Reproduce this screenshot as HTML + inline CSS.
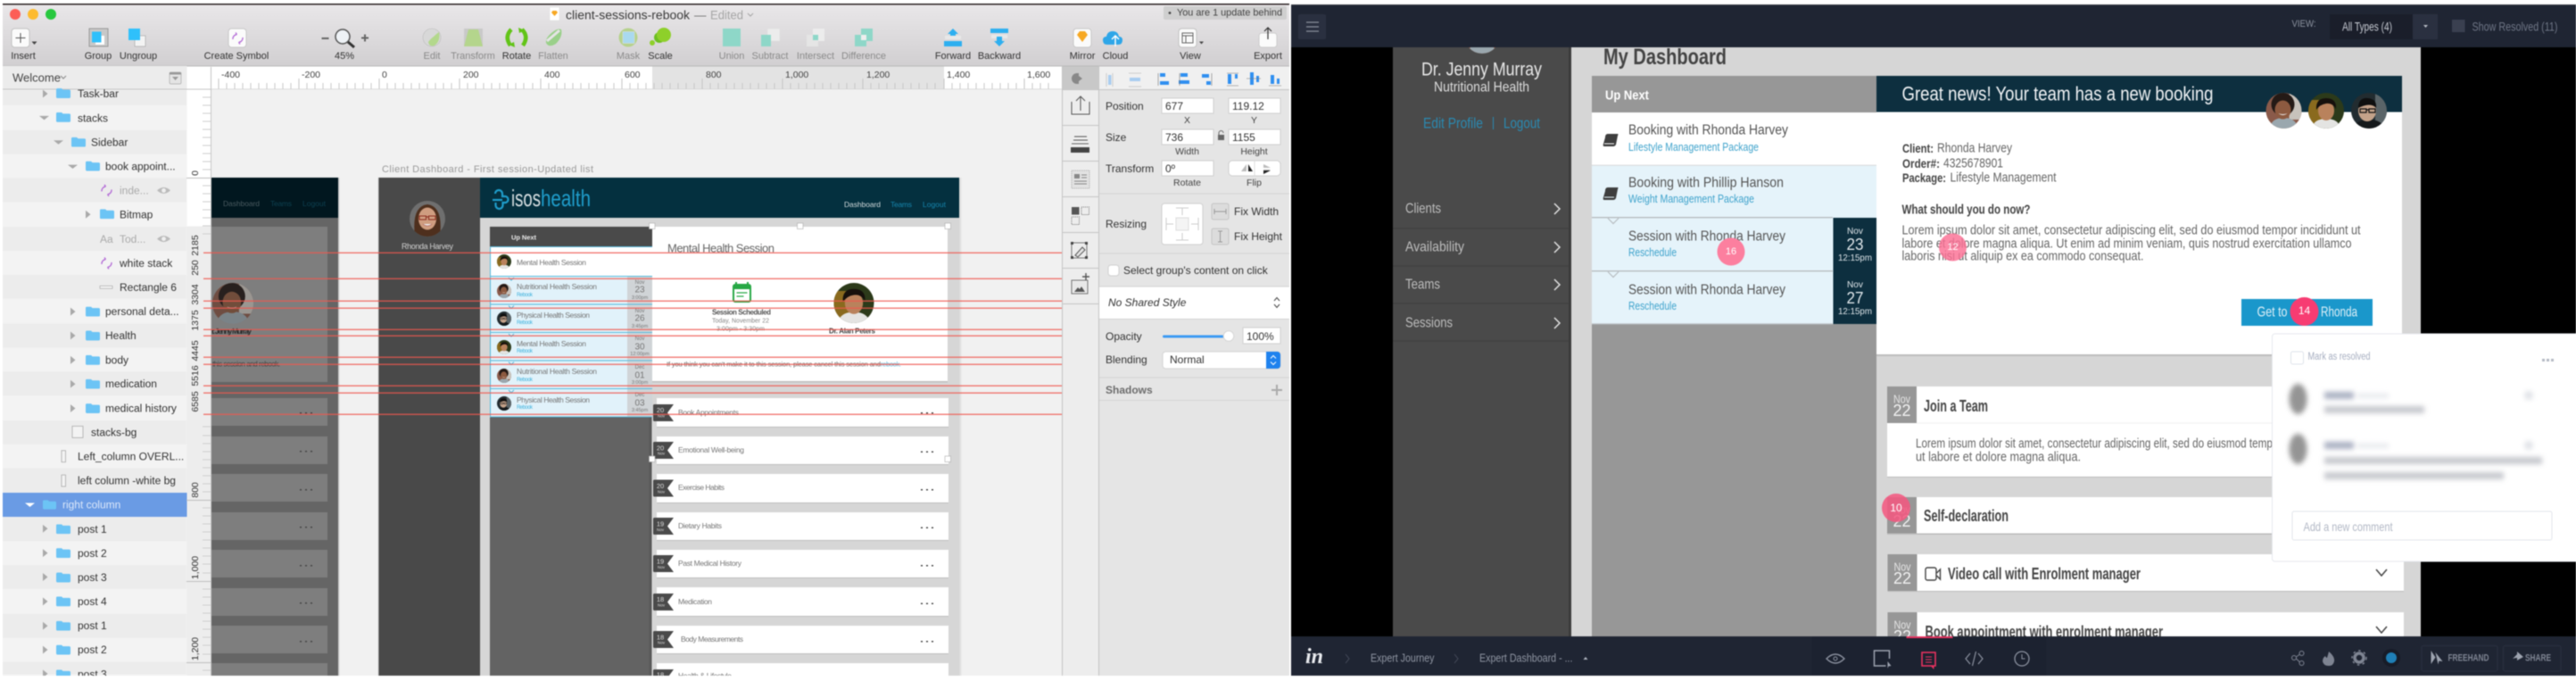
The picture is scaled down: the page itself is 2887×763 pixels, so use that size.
<!DOCTYPE html>
<html><head><meta charset="utf-8"><title>Sketch and InVision</title>
<style>
html,body{margin:0;padding:0;background:#fff;width:2887px;height:763px;overflow:hidden}
svg{display:block;filter:blur(.4px)}
text{font-family:"Liberation Sans",sans-serif;dominant-baseline:central;white-space:pre}
.m{text-anchor:middle}.e{text-anchor:end}.b{font-weight:bold}
.tb{font-size:11px;fill:#333;text-anchor:middle}.tg{font-size:11px;fill:#8a8a8a;text-anchor:middle}
.ru{font-size:10.5px;fill:#444}
.ly{font-size:12px;fill:#333}.lg{font-size:12px;fill:#aaa}
.in{font-size:12px;fill:#333}.ins{font-size:10.5px;fill:#444;text-anchor:middle}
.v{font-size:10.5px;fill:#444;text-anchor:middle}
.rt{font-size:15.5px;fill:#555}.rs{font-size:12.5px;fill:#3fa3cc}
.nv{font-size:16px;fill:#bdbdbd}
.sm{font-size:8.5px;fill:#777}.sb{font-size:6px;fill:#45b4de}
.dn{fill:#777;text-anchor:middle}
.ct{font-size:11px;fill:#777}
.bd{font-size:15px;fill:#666}
.ti{font-size:18px;fill:#444;font-weight:bold}
</style></head><body>
<svg xmlns="http://www.w3.org/2000/svg" width="2887" height="763" viewBox="0 0 2887 763">
<defs>
<linearGradient id="tg" x1="0" y1="0" x2="0" y2="1"><stop offset="0" stop-color="#e9e7e9"/><stop offset="1" stop-color="#d1cfd1"/></linearGradient>
<symbol id="fo" viewBox="0 0 16 11"><path d="M0 1.5Q0 0 1.5 0H6L7.500 1.500H14.500Q16 1.500 16 3V9.500Q16 11 14.500 11H1.500Q0 11 0 9.500Z" fill="#6cc4f5"/></symbol>
<path id="ar" d="M0 0L5.500 4.500L0 9Z" fill="#a9a9a9"/>
<path id="ad" d="M0 0H11L5.500 4.500Z" fill="#a9a9a9"/>
<path id="dt" d="M0 0h2v1.500H0zM6 0h2v1.500H6zM12 0h2v1.500h-2z" fill="#444"/>
<path id="rb" d="M1.500 0H23L16 9.500L23 19H1.500Q0 19 0 17.500V1.500Q0 0 1.500 0Z" fill="#4a4a4a"/>
<g id="ey"><path d="M0 4.500Q7.500 -2.500 15 4.500Q7.500 11.500 0 4.500Z" fill="#bbb"/><circle cx="7.500" cy="4.500" r="2.400" fill="#f0f0f0"/></g>
<g id="sy" fill="none" stroke="#b36bd6" stroke-width="1.300"><path d="M2 8A5 5 0 0 1 6.500 2.500M6.500 2.500L5 0.500M6.500 2.500L4 3.500"/><path d="M13 6A5 5 0 0 1 8.500 11.500M8.500 11.500L10 13.500M8.500 11.500L11 10.500"/></g>
<clipPath id="cc"><circle cx="20" cy="20" r="20"/></clipPath>
<symbol id="am" viewBox="0 0 40 40"><g clip-path="url(#cc)"><rect width="40" height="40" fill="#2c3a1a"/><rect width="16" height="28" y="8" fill="#8a6a1e"/><path d="M4 40Q6 29 20 29Q34 29 36 40Z" fill="#e4e4e2"/><ellipse cx="20" cy="20" rx="9" ry="11" fill="#b9825c"/><path d="M9 19Q8 6 20 6Q32 6 31 18Q27 11 20 12Q13 13 9 19Z" fill="#16100c"/></g></symbol>
<symbol id="aw" viewBox="0 0 40 40"><g clip-path="url(#cc)"><rect width="40" height="40" fill="#8a5a4a"/><rect x="26" width="14" height="30" fill="#c7c2bb"/><path d="M4 40Q6 28 20 28Q34 28 36 40Z" fill="#9aa7ae"/><circle cx="19" cy="13" r="13" fill="#241a16"/><ellipse cx="19" cy="19" rx="9" ry="10.500" fill="#8d5a40"/><path d="M14 23Q19 27 24 23Q19 25 14 23Z" fill="#eee"/></g></symbol>
<symbol id="ag" viewBox="0 0 40 40"><g clip-path="url(#cc)"><rect width="40" height="40" fill="#222c30"/><rect x="27" width="13" height="40" fill="#5a6468"/><path d="M2 40Q6 30 20 30Q34 30 38 40Z" fill="#15191b"/><ellipse cx="18" cy="20" rx="10" ry="12" fill="#c4a28a"/><path d="M8 17Q8 5 19 6Q29 7 28 17Q22 10 8 17Z" fill="#0f0f0f"/><path d="M10 18h7v4h-7zM20 18h7v4h-7zM17 19h3" fill="none" stroke="#111" stroke-width="1.200"/></g></symbol>
<symbol id="ar2" viewBox="0 0 40 40"><g clip-path="url(#cc)"><rect width="40" height="40" fill="#6f6f6f"/><path d="M6 40Q2 6 20 4Q38 6 34 40Z" fill="#4e2f1d"/><ellipse cx="20" cy="20" rx="10" ry="12.500" fill="#cf9d80"/><path d="M11 17h7.500v4H11zM21.500 17H29v4h-7.500zM18.500 18h3" fill="none" stroke="#8c2f20" stroke-width="1.100"/><path d="M15 26Q20 30 25 26" fill="#eee" stroke="#a55" stroke-width=".6"/></g></symbol>
<filter id="bl" x="-30%" y="-30%" width="160%" height="160%"><feGaussianBlur stdDeviation="3"/></filter>
</defs>

<rect width="2887" height="763" fill="#fff"/>

<!-- SKETCH WINDOW -->
<rect x="3" y="5" width="1442" height="752" fill="#f1f1f1"/>
<rect x="3" y="4" width="1442" height="1.500" fill="#2b2222"/>
<rect x="3" y="5.500" width="1442" height="68.500" fill="url(#tg)"/>
<rect x="3" y="73.500" width="1442" height="1" fill="#b9b9b9"/>
<circle cx="17" cy="16" r="6" fill="#fc5e56"/><circle cx="37" cy="16" r="6" fill="#fdbb2f"/><circle cx="57" cy="16" r="6" fill="#28c83f"/>
<rect x="616" y="8" width="11" height="15" fill="#fff" stroke="#ddd" stroke-width=".5"/><path d="M618 14l1.500-2h4l1.500 2-3.500 4z" fill="#f7a823"/>
<text x="634" y="17" font-size="13.500" fill="#3a3a3a" textLength="139" lengthAdjust="spacingAndGlyphs">client-sessions-rebook</text>
<text x="778" y="17" font-size="13.500" fill="#777">—</text>
<text x="796" y="17" font-size="13.500" fill="#a5a5a5" textLength="37" lengthAdjust="spacingAndGlyphs">Edited</text>
<path d="M838 15l3 3 3-3" fill="none" stroke="#a5a5a5"/>
<rect x="1304" y="7" width="138" height="15" rx="2" fill="#cfcfcf"/>
<circle cx="1311" cy="14.500" r="1.400" fill="#444"/>
<text x="1319" y="14.500" font-size="11" fill="#444" textLength="118" lengthAdjust="spacingAndGlyphs">You are 1 update behind</text>

<!-- toolbar icons -->
<rect x="13" y="32" width="20" height="21" rx="3.500" fill="#fbfbfb" stroke="#c2c2c2"/>
<path d="M23 37v11M17.500 42.500h11" stroke="#555"/><path d="M35.500 46.500h6l-3 3.500z" fill="#444"/>
<rect x="100" y="32" width="21" height="20" fill="#c8c8c8" stroke="#999"/><rect x="107" y="40" width="10" height="10" fill="#fff"/><rect x="103" y="35.500" width="10.500" height="12" fill="#2fc0fb"/>
<rect x="151" y="40" width="12" height="12" fill="#f3f3f3" stroke="#aaa" stroke-width=".7"/><rect x="144" y="32" width="13" height="13" fill="#2fc0fb"/>
<rect x="256" y="32" width="20" height="21" rx="3.500" fill="#fbfbfb" stroke="#c8c8c8"/><use href="#sy" x="259" y="36" stroke="#d35fe8"/>
<rect x="360.500" y="42" width="8" height="2" fill="#666"/>
<circle cx="384" cy="41" r="8" fill="#eef2f6" stroke="#555" stroke-width="1.500"/><path d="M390 47l7 6" stroke="#333" stroke-width="3"/>
<path d="M405 42.500h8M409 38.500v8" stroke="#666" stroke-width="2"/>
<circle cx="484" cy="42" r="10" fill="#d8d8d8" stroke="#bbb" stroke-width=".6"/><path d="M492 36q2 10-5 15q-6 2-7-4q3-4 6-6q3-3 6-5z" fill="#b3d88c"/>
<rect x="520" y="32" width="21" height="20" fill="#c9c9c9"/><path d="M525 33h11l5 19h-21z" fill="#b4d58c"/>
<path d="M573 33q-8 8-1 18M585 33q8 8 1 18" fill="none" stroke="#62c418" stroke-width="4.500"/><path d="M570 50l6-3 1 6zM588 34l-6 3-1-6z" fill="#62c418"/>
<path d="M629 33q2 8-6 16q-8 5-11-1q-1-5 6-11q7-6 11-4z" fill="#9ad08a"/><path d="M613 46l14-12" stroke="#e6e4e6" stroke-width="3"/>
<circle cx="704" cy="42" r="10.500" fill="#b6d28d"/><rect x="698" y="35.500" width="13" height="13" fill="#a9d9ef" stroke="#ddd" stroke-width=".6"/>
<circle cx="739" cy="42" r="6" fill="#6cbf20"/><circle cx="744" cy="39" r="8" fill="#8ed02a"/><circle cx="731" cy="48" r="3" fill="#8ed02a"/>
<path d="M810 32h20v20h-10v-10h-10zM810 42h10v10h-10z" fill="#8ed7c8"/>
<rect x="860" y="32" width="14" height="14" fill="#ececec" stroke="#ddd" stroke-width=".5"/><rect x="853" y="39" width="11" height="13" fill="#8ed7c8"/>
<rect x="911" y="32" width="13" height="14" fill="#ececec"/><rect x="904" y="39" width="13" height="13" fill="#e5e5e5"/><rect x="911" y="39" width="6" height="6" fill="#8ed7c8"/>
<path d="M965 32h13v14h-7v6h-13v-13h7z" fill="#8ed7c8"/><rect x="965" y="39" width="6" height="6" fill="#eee"/>
<path d="M1068 32l6 6h-3v6h-6v-6h-3z" fill="#2daff0"/><rect x="1059" y="40" width="18" height="4" fill="#e8e8e8"/><rect x="1058" y="46" width="20" height="6" fill="#2daff0"/>
<rect x="1110" y="32" width="20" height="5" fill="#2daff0"/><rect x="1111" y="39" width="18" height="4" fill="#e8e8e8"/><path d="M1120 52l-6-6h3v-5h6v5h3z" fill="#2daff0"/>
<rect x="1203" y="32" width="20" height="21" rx="3.500" fill="#fbfbfb" stroke="#c8c8c8"/><path d="M1207 39l3-4h6l3 4-6 8z" fill="#f7a823"/>
<path d="M1241 50q-5 0-5-5q0-4 4-4q1-6 7-6q6 0 7 6q4 0 4 4q0 5-5 5z" fill="#2ea6e8"/><path d="M1250 52v-12M1246 44l4-4 4 4" fill="none" stroke="#fff" stroke-width="1.500"/>
<rect x="1321" y="32" width="20" height="21" rx="3.500" fill="#fbfbfb" stroke="#c2c2c2"/><rect x="1325" y="37" width="12" height="11" fill="none" stroke="#666"/><path d="M1325 40h12M1329 40v8" stroke="#666"/><path d="M1344 46.500h5l-2.500 3z" fill="#444"/>
<rect x="1411" y="37" width="20" height="16" rx="3" fill="#fbfbfb" stroke="#ccc"/><path d="M1421 44V31M1417 35l4-4 4 4" fill="none" stroke="#333" stroke-width="1.200"/>

<text x="26" y="63" class="tb">Insert</text><text x="110" y="63" class="tb">Group</text><text x="155" y="63" class="tb">Ungroup</text>
<text x="265" y="63" class="tb">Create Symbol</text><text x="386" y="63" class="tb">45%</text>
<text x="484" y="63" class="tg">Edit</text><text x="530" y="63" class="tg">Transform</text><text x="579" y="63" class="tb">Rotate</text><text x="620" y="63" class="tg">Flatten</text>
<text x="704" y="63" class="tg">Mask</text><text x="740" y="63" class="tb">Scale</text>
<text x="820" y="63" class="tg">Union</text><text x="863" y="63" class="tg">Subtract</text><text x="914" y="63" class="tg">Intersect</text><text x="968" y="63" class="tg">Difference</text>
<text x="1068" y="63" class="tb">Forward</text><text x="1120" y="63" class="tb">Backward</text><text x="1213" y="63" class="tb">Mirror</text><text x="1250" y="63" class="tb">Cloud</text>
<text x="1334" y="63" class="tb">View</text><text x="1421" y="63" class="tb">Export</text>

<!-- layer panel -->
<rect x="3" y="74" width="206.500" height="683" fill="#f3f3f3"/>
<rect x="3" y="74.500" width="206.500" height="25.500" fill="#ececec"/><rect x="3" y="99.500" width="206.500" height="1" fill="#c4c4c4"/>
<text x="14" y="87" font-size="13" fill="#444">Welcome</text><path d="M68 85l3 3 3-3" fill="none" stroke="#888"/>
<rect x="190" y="81" width="13" height="13" rx="1.500" fill="#e4e4e4" stroke="#aaa" stroke-width=".7"/><path d="M193 86h7l-3.500 4z" fill="#999"/><rect x="190" y="81" width="13" height="2.500" fill="#999"/>
<g transform="translate(0,0.58) scale(1,.9945)">
<g fill="#ececec">
<rect x="3" y="101" width="206" height="17"/><rect x="3" y="146" width="206" height="27"/><rect x="3" y="200" width="206" height="27"/><rect x="3" y="255" width="206" height="27"/><rect x="3" y="309" width="206" height="27"/><rect x="3" y="364" width="206" height="27"/><rect x="3" y="418" width="206" height="27"/><rect x="3" y="473" width="206" height="27"/><rect x="3" y="527" width="206" height="27"/><rect x="3" y="582" width="206" height="27"/><rect x="3" y="636" width="206" height="27"/><rect x="3" y="691" width="206" height="27"/><rect x="3" y="745" width="206" height="14"/>
</g>
<rect x="3" y="554.500" width="206.500" height="27.200" fill="#6a9be4"/>

<use href="#ar" x="48" y="100.500"/><use href="#fo" x="63" y="99" width="16" height="11"/><text x="87" y="105" class="ly">Task-bar</text>
<use href="#ad" x="44" y="130"/><use href="#fo" x="63" y="126" width="16" height="11"/><text x="87" y="132.500" class="ly">stacks</text>
<use href="#ad" x="60" y="157.500"/><use href="#fo" x="80" y="154" width="16" height="11"/><text x="102" y="160" class="ly">Sidebar</text>
<use href="#ad" x="76" y="185"/><use href="#fo" x="96" y="181" width="16" height="11"/><text x="118" y="187" class="ly">book appoint...</text>
<use href="#sy" x="112" y="207"/><text x="134" y="214" class="lg">inde...</text><use href="#ey" x="176" y="209.500"/>
<use href="#ar" x="96" y="236.500"/><use href="#fo" x="112" y="235" width="16" height="11"/><text x="134" y="241.500" class="ly">Bitmap</text>
<text x="112" y="269" class="lg">Aa</text><text x="134" y="269" class="lg">Tod...</text><use href="#ey" x="176" y="264"/>
<use href="#sy" x="112" y="289"/><text x="134" y="296" class="ly">white stack</text>
<rect x="112" y="321.500" width="14" height="3" fill="#f3f3f3" stroke="#aaa" stroke-width=".7"/><text x="134" y="323" class="ly">Rectangle 6</text>
<use href="#ar" x="79" y="346"/><use href="#fo" x="96" y="345" width="16" height="11"/><text x="118" y="350.500" class="ly">personal deta...</text>
<use href="#ar" x="79" y="373"/><use href="#fo" x="96" y="372" width="16" height="11"/><text x="118" y="377.500" class="ly">Health</text>
<use href="#ar" x="79" y="400.500"/><use href="#fo" x="96" y="399.500" width="16" height="11"/><text x="118" y="405" class="ly">body</text>
<use href="#ar" x="79" y="427.500"/><use href="#fo" x="96" y="426.500" width="16" height="11"/><text x="118" y="432" class="ly">medication</text>
<use href="#ar" x="79" y="455"/><use href="#fo" x="96" y="454" width="16" height="11"/><text x="118" y="459.500" class="ly">medical history</text>
<rect x="81" y="479.500" width="12" height="13" fill="#f3f3f3" stroke="#aaa" stroke-width=".8"/><text x="102" y="486.500" class="ly">stacks-bg</text>
<rect x="69" y="507" width="4.500" height="13" fill="#f3f3f3" stroke="#aaa" stroke-width=".8"/><text x="87" y="514" class="ly">Left_column OVERL...</text>
<rect x="69" y="534.500" width="4.500" height="13" fill="#f3f3f3" stroke="#aaa" stroke-width=".8"/><text x="87" y="541" class="ly">left column -white bg</text>
<path d="M28 566H39L33.500 570.500Z" fill="#fff"/><use href="#fo" x="48" y="562.500" width="15" height="11"/><text x="70" y="568" class="ly" style="fill:#dce8fa">right column</text>
<use href="#ar" x="48" y="590.500"/><use href="#fo" x="63" y="590" width="16" height="11"/><text x="87" y="595.500" class="ly">post 1</text>
<use href="#ar" x="48" y="618"/><use href="#fo" x="63" y="617" width="16" height="11"/><text x="87" y="623" class="ly">post 2</text>
<use href="#ar" x="48" y="645"/><use href="#fo" x="63" y="644.500" width="16" height="11"/><text x="87" y="650" class="ly">post 3</text>
<use href="#ar" x="48" y="672.500"/><use href="#fo" x="63" y="671.500" width="16" height="11"/><text x="87" y="677" class="ly">post 4</text>
<use href="#ar" x="48" y="700"/><use href="#fo" x="63" y="699" width="16" height="11"/><text x="87" y="704.500" class="ly">post 1</text>
<use href="#ar" x="48" y="727"/><use href="#fo" x="63" y="726" width="16" height="11"/><text x="87" y="731.500" class="ly">post 2</text>
<use href="#ar" x="48" y="754"/><use href="#fo" x="63" y="754" width="16" height="11"/><text x="87" y="759" class="ly">post 3</text>
</g>

<!-- horizontal ruler -->
<rect x="209.500" y="74.500" width="980.500" height="25.500" fill="#fff"/>
<rect x="731" y="74.500" width="327" height="25.500" fill="#e3e3e3"/>
<rect x="209.500" y="99.500" width="980.500" height="1" fill="#c6c6c6"/>
<path d="M236.500 75v25M245 88v12M335 88v12M425 88v12M515 88v12M606 88v12M697 88v12M787 88v12M877 88v12M967 88v12M1058 88v12M1148 88v12" stroke="#c4c4c4"/>
<path d="M254 93v7M263 93v7M272 93v7M281 93v7M290 93v7M299 93v7M308 93v7M317 93v7M326 93v7M344 93v7M353 93v7M362 93v7M371 93v7M380 93v7M389 93v7M398 93v7M407 93v7M416 93v7M434 93v7M443 93v7M452 93v7M461 93v7M470 93v7M479 93v7M488 93v7M497 93v7M506 93v7M524 93v7M533 93v7M542 93v7M551 93v7M560 93v7M569 93v7M578 93v7M587 93v7M597 93v7M615 93v7M624 93v7M633 93v7M642 93v7M651 93v7M660 93v7M669 93v7M678 93v7M688 93v7M706 93v7M715 93v7M724 93v7M733 93v7M742 93v7M751 93v7M760 93v7M769 93v7M778 93v7M796 93v7M805 93v7M814 93v7M823 93v7M832 93v7M841 93v7M850 93v7M859 93v7M868 93v7M886 93v7M895 93v7M904 93v7M913 93v7M922 93v7M931 93v7M940 93v7M949 93v7M958 93v7M976 93v7M985 93v7M994 93v7M1003 93v7M1012 93v7M1021 93v7M1030 93v7M1039 93v7M1048 93v7M1067 93v7M1076 93v7M1085 93v7M1094 93v7M1103 93v7M1112 93v7M1121 93v7M1130 93v7M1139 93v7M1157 93v7M1166 93v7M1175 93v7" stroke="#c8c8c8"/>
<text x="248" y="84" class="ru">-400</text><text x="338" y="84" class="ru">-200</text><text x="428" y="84" class="ru">0</text><text x="519" y="84" class="ru">200</text><text x="610" y="84" class="ru">400</text><text x="700" y="84" class="ru">600</text><text x="791" y="84" class="ru">800</text><text x="880" y="84" class="ru">1,000</text><text x="971" y="84" class="ru">1,200</text><text x="1061" y="84" class="ru">1,400</text><text x="1151" y="84" class="ru">1,600</text>

<!-- vertical ruler -->
<rect x="209.500" y="100.500" width="26.500" height="656.500" fill="#ededed"/>
<rect x="209.500" y="100.500" width="26.500" height="153" fill="#fff"/>
<rect x="236" y="100" width="1" height="657" fill="#c6c6c6"/>
<path d="M227 109h9M227 118h9M227 127h9M227 136h9M227 145h9M227 154h9M227 163h9M227 172h9M227 181h9M227 190h9M227 208h9M227 217h9M227 226h9M227 235h9M227 244h9M227 253h9M227 262h9M227 478h9M227 488h9M227 497h9M227 506h9M227 515h9M227 524h9M227 533h9M227 542h9M227 551h9M227 569h9M227 578h9M227 587h9M227 596h9M227 605h9M227 614h9M227 623h9M227 632h9M227 642h9M227 660h9M227 669h9M227 678h9M227 687h9M227 696h9M227 705h9M227 714h9M227 723h9M227 733h9M227 751h9" stroke="#cfcfcf"/>
<path d="M209 199.500h27M209 560.500h27M209 651.500h27M209 742.500h27" stroke="#bdbdbd"/>
<g font-size="10.500" fill="#333" text-anchor="middle">
<text transform="translate(219,194) rotate(-90)">0</text>
<text transform="translate(219,275) rotate(-90)">2185</text>
<text transform="translate(219,300) rotate(-90)">250</text>
<text transform="translate(219,330) rotate(-90)">3304</text>
<text transform="translate(219,359) rotate(-90)">1375</text>
<text transform="translate(219,393) rotate(-90)">4445</text>
<text transform="translate(219,421) rotate(-90)">5516</text>
<text transform="translate(219,450) rotate(-90)">6585</text>
<text transform="translate(219,549) rotate(-90)">800</text>
<text transform="translate(219,636) rotate(-90)">1,000</text>
<text transform="translate(219,727) rotate(-90)">1,200</text>
</g>

<!-- canvas -->
<rect x="237" y="100" width="953" height="657" fill="#f1f1f1"/>
<text x="428" y="190" font-size="11" fill="#9a9a9a" textLength="237" lengthAdjust="spacing">Client Dashboard - First session-Updated list</text>

<!-- artboard 1 (dim) -->
<rect x="237" y="199" width="142" height="558" fill="#656565"/>
<rect x="379" y="199" width="1.500" height="558" fill="#cfcfcf"/>
<rect x="237" y="199" width="142" height="45" fill="#01171f"/>
<text x="250" y="228" font-size="8.500" fill="#4a5a60" textLength="41" lengthAdjust="spacing">Dashboard</text>
<text x="303" y="228" font-size="8.500" fill="#0d4050" textLength="24" lengthAdjust="spacing">Teams</text>
<text x="339" y="228" font-size="8.500" fill="#0d4050" textLength="26" lengthAdjust="spacing">Logout</text>
<rect x="237" y="254" width="130" height="174" fill="#7e7e7e"/>
<rect x="237" y="446" width="130" height="31" fill="#7e7e7e"/>
<rect x="237" y="489" width="130" height="31" fill="#7e7e7e"/><rect x="237" y="531" width="130" height="31" fill="#7e7e7e"/><rect x="237" y="574" width="130" height="31" fill="#7e7e7e"/><rect x="237" y="616" width="130" height="31" fill="#7e7e7e"/><rect x="237" y="659" width="130" height="31" fill="#7e7e7e"/><rect x="237" y="701" width="130" height="31" fill="#7e7e7e"/><rect x="237" y="743" width="130" height="14" fill="#7e7e7e"/>
<g opacity=".85"><use href="#aw" x="238" y="317" width="46" height="46"/></g>
<circle cx="261" cy="340" r="23" fill="#000" opacity=".18"/>
<text x="237" y="371" font-size="8.500" font-weight="bold" fill="#2b2b2b" textLength="45" lengthAdjust="spacing">r. Jenny Murray</text>
<text x="238" y="408" font-size="8" fill="#3c3c3c" textLength="76" lengthAdjust="spacing">this session and rebook.</text>
<use href="#dt" x="336" y="462"/><use href="#dt" x="336" y="505"/><use href="#dt" x="336" y="548"/><use href="#dt" x="336" y="590"/><use href="#dt" x="336" y="633"/><use href="#dt" x="336" y="675"/><use href="#dt" x="336" y="718"/>

<!-- artboard 2 -->
<rect x="424.500" y="199" width="113.500" height="558" fill="#494949"/>
<rect x="423.500" y="199" width="1" height="558" fill="#c9c9c9"/>
<rect x="538" y="199" width="538" height="558" fill="#d6d6d6"/>
<rect x="1075.500" y="199" width="2" height="558" fill="#e2e2e2"/>
<rect x="538" y="199" width="537" height="45" fill="#04303f"/>
<use href="#ar2" x="459" y="225" width="40" height="40"/>
<text x="479" y="276" font-size="9" fill="#cfcfcf" class="m" textLength="58" lengthAdjust="spacing">Rhonda Harvey</text>
<path d="M555 217a4 4 0 0 1 8 0v3h3a3.500 3.500 0 0 1 0 7h-2.500v3a4 4 0 0 1-8 0v-3" fill="none" stroke="#1f9dcb" stroke-width="2.200"/><path d="M552 224h11" stroke="#1f9dcb" stroke-width="2.200"/>
<text x="573" y="222" font-size="26" fill="#d7dfe2" textLength="33" lengthAdjust="spacingAndGlyphs">isos</text>
<text x="606" y="222" font-size="26" fill="#1f9dcb" textLength="56" lengthAdjust="spacingAndGlyphs">health</text>
<text x="946" y="229" font-size="8.500" fill="#d0d8da" textLength="41" lengthAdjust="spacing">Dashboard</text>
<text x="998" y="229" font-size="8.500" fill="#1684ac" textLength="24" lengthAdjust="spacing">Teams</text>
<text x="1034" y="229" font-size="8.500" fill="#1684ac" textLength="26" lengthAdjust="spacing">Logout</text>

<!-- up next list -->
<rect x="549" y="254" width="182" height="22.500" fill="#4a4a4a"/>
<text x="573" y="266" font-size="7.500" font-weight="bold" fill="#e8e8e8" textLength="28" lengthAdjust="spacing">Up Next</text>
<rect x="549" y="277" width="182" height="32" fill="#fff"/>
<rect x="549" y="309" width="182" height="158" fill="#e1f2fa"/>
<rect x="703" y="309" width="28" height="158" fill="#d0d4d7"/>
<path d="M549.500 276.500H731M549.500 309.500H731M549.500 341H731M549.500 372.500H731M549.500 404H731M549.500 435.500H731M549.500 467H731M549.500 277V467" stroke="#55b9dc" fill="none"/>
<path d="M570 311l3 3 3-3M570 342.500l3 3 3-3M570 374l3 3 3-3M570 405.500l3 3 3-3M570 437l3 3 3-3" stroke="#55b9dc" fill="#e1f2fa"/>
<use href="#am" x="557" y="285" width="16" height="16"/><use href="#aw" x="557" y="318" width="16" height="16"/><use href="#ag" x="557" y="349" width="16" height="16"/><use href="#am" x="557" y="381" width="16" height="16"/><use href="#aw" x="557" y="413" width="16" height="16"/><use href="#ag" x="557" y="444" width="16" height="16"/>
<text x="579" y="294" class="sm" textLength="78" lengthAdjust="spacing">Mental Health Session</text>
<text x="579" y="321" class="sm" textLength="90" lengthAdjust="spacing">Nutritional Health Session</text><text x="579" y="331" class="sb" textLength="18" lengthAdjust="spacing">Rebook</text>
<text x="579" y="353" class="sm" textLength="82" lengthAdjust="spacing">Physical Health Session</text><text x="579" y="362" class="sb" textLength="18" lengthAdjust="spacing">Rebook</text>
<text x="579" y="385" class="sm" textLength="78" lengthAdjust="spacing">Mental Health Session</text><text x="579" y="394" class="sb" textLength="18" lengthAdjust="spacing">Rebook</text>
<text x="579" y="416" class="sm" textLength="90" lengthAdjust="spacing">Nutritional Health Session</text><text x="579" y="426" class="sb" textLength="18" lengthAdjust="spacing">Rebook</text>
<text x="579" y="448" class="sm" textLength="82" lengthAdjust="spacing">Physical Health Session</text><text x="579" y="457" class="sb" textLength="18" lengthAdjust="spacing">Rebook</text>
<g class="dn">
<text x="717" y="317" font-size="6">Nov</text><text x="717" y="325" font-size="10">23</text><text x="717" y="334" font-size="5.500">3:00pm</text>
<text x="717" y="349" font-size="6">Nov</text><text x="717" y="357" font-size="10">26</text><text x="717" y="366" font-size="5.500">3:45pm</text>
<text x="717" y="380" font-size="6">Nov</text><text x="717" y="389" font-size="10">30</text><text x="717" y="397" font-size="5.500">12:00pm</text>
<text x="717" y="412" font-size="6">Dec</text><text x="717" y="421" font-size="10">01</text><text x="717" y="429" font-size="5.500">3:00pm</text>
<text x="717" y="443" font-size="6">Dec</text><text x="717" y="452" font-size="10">03</text><text x="717" y="460" font-size="5.500">3:45pm</text>
</g>
<rect x="549" y="467.500" width="180" height="290" fill="#636363"/>
<rect x="727.500" y="467.500" width="3" height="290" fill="#5a5a5a"/>

<!-- main card -->
<rect x="731" y="254" width="331" height="174.500" fill="#bdbdbd"/><rect x="731" y="254" width="331" height="173" fill="#fff"/>
<text x="748" y="278" font-size="13" fill="#666" textLength="120" lengthAdjust="spacing">Mental Health Session</text>
<rect x="822" y="319" width="19" height="19" rx="2" fill="#fff" stroke="#27a845" stroke-width="2"/><rect x="822" y="319" width="19" height="5" fill="#27a845"/><path d="M825 316v4M838 316v4" stroke="#27a845" stroke-width="2"/><path d="M825.500 328h12M825.500 332h8" stroke="#27a845" stroke-width="1.300"/>
<text x="831" y="350" font-size="8" font-weight="bold" fill="#555" class="m" textLength="66" lengthAdjust="spacing">Session Scheduled</text>
<text x="830" y="360" font-size="7" fill="#888" class="m" textLength="64" lengthAdjust="spacing">Today, November 22</text>
<text x="830" y="369" font-size="7" fill="#888" class="m" textLength="54" lengthAdjust="spacing">3:00pm - 3:30pm</text>
<use href="#am" x="934.500" y="317" width="45" height="45"/>
<text x="955" y="371" font-size="8" font-weight="bold" fill="#444" class="m" textLength="52" lengthAdjust="spacing">Dr. Alan Peters</text>
<text x="747" y="408" font-size="7.500" fill="#666" textLength="240" lengthAdjust="spacing">If you think you can't make it to this session, please cancel this session and</text>
<text x="987" y="408" font-size="7.500" fill="#4fb5dd" textLength="23" lengthAdjust="spacing">rebook.</text>

<!-- small cards -->
<g fill="#bdbdbd"><rect x="736" y="447" width="327" height="32"/><rect x="736" y="490" width="327" height="31"/><rect x="736" y="532" width="327" height="32"/><rect x="736" y="575" width="327" height="31"/><rect x="736" y="617" width="327" height="31"/><rect x="736" y="659" width="327" height="32"/><rect x="736" y="702" width="327" height="31"/></g>
<g fill="#fff"><rect x="736" y="446" width="327" height="32"/><rect x="736" y="489" width="327" height="31"/><rect x="736" y="531" width="327" height="32"/><rect x="736" y="574" width="327" height="31"/><rect x="736" y="616" width="327" height="31"/><rect x="736" y="658" width="327" height="32"/><rect x="736" y="701" width="327" height="31"/><rect x="736" y="743" width="327" height="14"/></g>
<use href="#rb" x="732" y="453"/><use href="#rb" x="732" y="495"/><use href="#rb" x="732" y="537.500"/><use href="#rb" x="732" y="580"/><use href="#rb" x="732" y="622"/><use href="#rb" x="732" y="665"/><use href="#rb" x="732" y="707"/><use href="#rb" x="732" y="750"/>
<g fill="#ddd" text-anchor="middle">
<text x="740" y="459.500" font-size="7.500">20</text><text x="741" y="466" font-size="4.500">Nov</text>
<text x="740" y="502" font-size="7.500">20</text><text x="741" y="508" font-size="4.500">Nov</text>
<text x="740" y="544.500" font-size="7.500">20</text><text x="741" y="551" font-size="4.500">Nov</text>
<text x="740" y="587" font-size="7.500">19</text><text x="740" y="593.500" font-size="4.500">Nov</text>
<text x="740" y="629" font-size="7.500">19</text><text x="741" y="635.500" font-size="4.500">Nov</text>
<text x="740" y="671.500" font-size="7.500">18</text><text x="741" y="678" font-size="4.500">Nov</text>
<text x="740" y="714" font-size="7.500">18</text><text x="741" y="720" font-size="4.500">Nov</text>
<text x="740" y="756" font-size="7.500">18</text>
</g>
<text x="760" y="462" class="ct" style="font-size:8.500px" textLength="68" lengthAdjust="spacing">Book Appointments</text>
<text x="760" y="504" class="ct" style="font-size:8.500px" textLength="74" lengthAdjust="spacing">Emotional Well-being</text>
<text x="760" y="546" class="ct" style="font-size:8.500px" textLength="52" lengthAdjust="spacing">Exercise Habits</text>
<text x="760" y="589" class="ct" style="font-size:8.500px" textLength="49" lengthAdjust="spacing">Dietary Habits</text>
<text x="760" y="631" class="ct" style="font-size:8.500px" textLength="71" lengthAdjust="spacing">Past Medical History</text>
<text x="760" y="674" class="ct" style="font-size:8.500px" textLength="38" lengthAdjust="spacing">Medication</text>
<text x="763" y="716" class="ct" style="font-size:8.500px" textLength="70" lengthAdjust="spacing">Body Measurements</text>
<text x="760" y="757" class="ct" style="font-size:8.500px" textLength="60" lengthAdjust="spacing">Health &amp; Lifestyle</text>
<use href="#dt" x="1032" y="462"/><use href="#dt" x="1032" y="505.500"/><use href="#dt" x="1032" y="548"/><use href="#dt" x="1032" y="590.500"/><use href="#dt" x="1032" y="633"/><use href="#dt" x="1032" y="675.500"/><use href="#dt" x="1032" y="718"/>

<!-- handles -->
<g fill="#fff" stroke="#aaa" stroke-width=".6"><rect x="727.500" y="250" width="6.500" height="6.500"/><rect x="893.500" y="250" width="6.500" height="6.500"/><rect x="1059" y="250" width="6.500" height="6.500"/><rect x="727.500" y="511" width="6.500" height="6.500"/><rect x="1059" y="511" width="6.500" height="6.500"/></g>

<!-- red guide lines -->
<g fill="#f0584f" opacity=".75"><rect x="228" y="282.500" width="962" height="1.500"/><rect x="228" y="311.500" width="962" height="1.500"/><rect x="228" y="336.500" width="962" height="1.500"/><rect x="228" y="344.500" width="962" height="1.500"/><rect x="228" y="368.500" width="962" height="1.500"/><rect x="228" y="375.500" width="962" height="1.500"/><rect x="228" y="399.500" width="962" height="1.500"/><rect x="228" y="407.500" width="962" height="1.500"/><rect x="228" y="431.500" width="962" height="1.500"/><rect x="228" y="439.500" width="962" height="1.500"/><rect x="228" y="463.500" width="962" height="1.500"/></g>

<!-- icons column -->
<rect x="1190" y="74.500" width="41" height="682.500" fill="#ededed"/>
<rect x="1190" y="74.500" width="41" height="26" fill="#c8c8c8"/>
<path d="M1207 82a6 6 0 0 0 0 12h2v-3l4-3-4-3v-3z" fill="#888"/>
<path d="M1190 100.500h41M1190 140.500h41M1190 180.500h41M1190 220.500h41M1190 260.500h41M1190 300.500h41M1190 340.500h41" stroke="#c4c4c4"/>
<rect x="1190" y="74" width="1" height="683" fill="#c4c4c4"/><rect x="1231" y="74" width="1" height="683" fill="#c4c4c4"/>
<path d="M1201 114v14h20v-14M1211 124v-16M1206 113l5-5 5 5" fill="none" stroke="#555" stroke-width="1"/>
<path d="M1204 153h14M1203 157h16" stroke="#555"/><rect x="1200" y="165" width="21" height="6" fill="#444"/><path d="M1201 161h19" stroke="#666"/>
<rect x="1201" y="191" width="20" height="20" fill="#e2e2e2" stroke="#aaa" stroke-dasharray="1 1"/><rect x="1204" y="195" width="6" height="5" fill="#888"/><path d="M1212 196h6M1212 199h6M1204 203h14M1204 206h14" stroke="#888"/>
<rect x="1201" y="232" width="8.500" height="8.500" fill="#555"/><rect x="1212" y="232" width="8.500" height="8.500" fill="none" stroke="#777" stroke-dasharray="1 1"/><rect x="1201" y="243" width="8.500" height="8.500" fill="none" stroke="#777" stroke-dasharray="1 1"/>
<rect x="1201" y="272" width="17" height="17" fill="none" stroke="#777"/><rect x="1200" y="271" width="3" height="3" fill="#444"/><rect x="1216" y="271" width="3" height="3" fill="#444"/><rect x="1200" y="287" width="3" height="3" fill="#444"/><rect x="1216" y="287" width="3" height="3" fill="#444"/><path d="M1205 286l8-9 3 3-8 8z" fill="#e4e4e4" stroke="#555"/>
<rect x="1201" y="314" width="18" height="15" fill="#e8e8e8" stroke="#777"/><path d="M1204 327l4-5 2 2 2-3 4 6z" fill="#555"/><path d="M1217 314v-8M1213 310h8" stroke="#555" stroke-width="1.400"/>

<!-- inspector -->
<rect x="1232" y="74.500" width="213" height="682.500" fill="#e5e5e5"/>
<rect x="1232" y="74.500" width="213" height="26" fill="#f0f0f0"/><rect x="1232" y="100" width="213" height="1" fill="#c4c4c4"/>
<path d="M1240 82v15M1247 82v15" stroke="#ccc"/><rect x="1242" y="84" width="3.500" height="11" fill="#a9cdf0"/>
<path d="M1265 82h14M1265 97h14" stroke="#ccc"/><rect x="1266" y="87" width="12" height="4" fill="#a9cdf0"/>
<g fill="#2f8ff0">
<rect x="1300" y="82" width="6" height="4"/><rect x="1300" y="91" width="10" height="4"/>
<rect x="1323" y="82" width="8" height="4"/><rect x="1321" y="90" width="12" height="4"/>
<rect x="1347" y="83" width="8" height="4"/><rect x="1352" y="91" width="5" height="4"/>
<rect x="1376" y="83" width="4" height="11"/><rect x="1384" y="83" width="3" height="5"/>
<rect x="1401" y="81" width="4" height="14"/><rect x="1408" y="85" width="3" height="7"/>
<rect x="1424" y="84" width="4" height="10"/><rect x="1431" y="88" width="3" height="6"/>
</g>
<path d="M1298 82v14M1358 82v14M1375 82h13M1375 96h13M1397 88h16M1322 82v14M1422 96h14" stroke="#777" stroke-width=".6"/>
<rect x="1302" y="110" width="58" height="17" fill="#fff" stroke="#cfcfcf"/><rect x="1377" y="110" width="58" height="17" fill="#fff" stroke="#cfcfcf"/>
<rect x="1302" y="145" width="58" height="17" fill="#fff" stroke="#cfcfcf"/><rect x="1377" y="145" width="58" height="17" fill="#fff" stroke="#cfcfcf"/>
<rect x="1302" y="180" width="58" height="17" fill="#fff" stroke="#cfcfcf"/><rect x="1377" y="180" width="58" height="17" rx="4" fill="#fff" stroke="#cfcfcf"/>
<path d="M1406 180v17" stroke="#ddd"/><path d="M1391 192l6-8v8z" fill="#bbb"/><path d="M1399 192v-8l5 8z" fill="#222"/><path d="M1416 184l8 4h-8zM1416 194l8-4h-8z" fill="#bbb"/><path d="M1416 195l8-4h-8z" fill="#222"/>
<text x="1239" y="119" class="in">Position</text><text x="1306" y="119" class="in">677</text><text x="1381" y="119" class="in">119.12</text>
<text x="1330.500" y="135" class="ins">X</text><text x="1405.500" y="135" class="ins">Y</text>
<text x="1239" y="154" class="in">Size</text><text x="1306" y="154" class="in">736</text><text x="1381" y="154" class="in">1155</text>
<rect x="1365" y="151" width="7" height="6" fill="#666"/><path d="M1366 151v-2a2.500 2.500 0 0 1 5 0" fill="none" stroke="#666"/>
<text x="1330.500" y="170" class="ins">Width</text><text x="1405.500" y="170" class="ins">Height</text>
<text x="1239" y="189" class="in">Transform</text><text x="1306" y="189" class="in">0º</text>
<text x="1330.500" y="205" class="ins">Rotate</text><text x="1405.500" y="205" class="ins">Flip</text>
<rect x="1232" y="216.500" width="213" height="1" fill="#d4d4d4"/>
<text x="1239" y="251" class="in">Resizing</text>
<rect x="1302" y="228" width="46" height="46" rx="3" fill="#fff" stroke="#cfcfcf"/><rect x="1318" y="244" width="14" height="14" fill="#f4f4f4" stroke="#ddd"/>
<path d="M1318 233h14M1325 233v8M1318 269h14M1325 261v8M1307 244v14M1307 251h8M1343 244v14M1335 251h8" stroke="#ccc"/>
<rect x="1358" y="228" width="19" height="18" rx="2" fill="#dcdcdc" stroke="#c4c4c4"/><path d="M1361 234v6M1374 234v6M1361 237h13" stroke="#999"/>
<rect x="1358" y="256" width="19" height="18" rx="2" fill="#dcdcdc" stroke="#c4c4c4"/><path d="M1365 259h5M1365 271h5M1367.500 259v12" stroke="#999"/>
<text x="1383" y="237" class="in">Fix Width</text><text x="1383" y="265" class="in">Fix Height</text>
<rect x="1232" y="283.500" width="213" height="1" fill="#d4d4d4"/>
<rect x="1242" y="297" width="12" height="12" rx="3" fill="#fff" stroke="#cfcfcf"/>
<text x="1259" y="303" class="in">Select group's content on click</text>
<rect x="1232" y="321" width="213" height="36" fill="#fff"/><rect x="1232" y="320.500" width="213" height="1" fill="#d4d4d4"/><rect x="1232" y="357" width="213" height="1" fill="#d4d4d4"/>
<text x="1242" y="339" font-size="12" font-style="italic" fill="#333">No Shared Style</text>
<path d="M1428 337l3-3.500 3 3.500M1428 341l3 3.500 3-3.500" fill="none" stroke="#444"/>
<text x="1239" y="377" class="in">Opacity</text>
<rect x="1303" y="375.500" width="74" height="3" rx="1.500" fill="#3e9bf3"/><circle cx="1377" cy="376.500" r="5.800" fill="#fff" stroke="#d5d5d5"/>
<rect x="1393" y="367" width="42" height="18" fill="#fff" stroke="#cfcfcf"/><text x="1397" y="377" class="in">100%</text>
<text x="1239" y="403" class="in">Blending</text>
<rect x="1303" y="394" width="132" height="19" rx="3.500" fill="#fff" stroke="#d5d5d5"/>
<path d="M1419 394h12.500a3.500 3.500 0 0 1 3.500 3.500v12a3.500 3.500 0 0 1-3.500 3.500H1419z" fill="#1f82ee"/>
<path d="M1424 401.500l3-3 3 3M1424 405.500l3 3 3-3" fill="none" stroke="#fff"/>
<text x="1311" y="403" class="in">Normal</text>
<rect x="1232" y="422.500" width="213" height="1" fill="#d4d4d4"/>
<text x="1239" y="437" font-size="12" font-weight="bold" fill="#6d6d6d">Shadows</text>
<path d="M1431 431v12M1425 437h12" stroke="#aaa" stroke-width="2"/>
<rect x="1232" y="448" width="213" height="1" fill="#d4d4d4"/>

<!-- INVISION PREVIEW -->
<rect x="1447" y="5" width="1440" height="752" fill="#000"/>
<rect x="1561" y="53" width="200" height="660" fill="#4a4a4a"/>
<rect x="1758" y="53" width="3" height="660" fill="#3c3c3c"/>
<rect x="1761" y="53" width="952" height="660" fill="#d6d6d6"/>
<rect x="1784" y="85" width="319" height="628" fill="#979797"/>
<text x="1797" y="64" font-size="25" font-weight="bold" fill="#444" textLength="138" lengthAdjust="spacingAndGlyphs">My Dashboard</text>

<use href="#aw" x="1641" y="20" width="40" height="40"/>
<text x="1660.500" y="78" font-size="21" fill="#e8e8e8" class="m" textLength="135" lengthAdjust="spacingAndGlyphs">Dr. Jenny Murray</text>
<text x="1660.500" y="98" font-size="16" fill="#dcdcdc" class="m" textLength="107" lengthAdjust="spacingAndGlyphs">Nutritional Health</text>
<text x="1595" y="138" font-size="17" fill="#2a8ab2" textLength="67" lengthAdjust="spacingAndGlyphs">Edit Profile</text>
<rect x="1673" y="131" width="1" height="14" fill="#2a8ab2"/>
<text x="1685" y="138" font-size="17" fill="#2a8ab2" textLength="41" lengthAdjust="spacingAndGlyphs">Logout</text>
<text x="1575" y="234" class="nv" textLength="40" lengthAdjust="spacingAndGlyphs">Clients</text>
<text x="1575" y="277" class="nv" textLength="66" lengthAdjust="spacingAndGlyphs">Availability</text>
<text x="1575" y="319" class="nv" textLength="39" lengthAdjust="spacingAndGlyphs">Teams</text>
<text x="1575" y="362" class="nv" textLength="53" lengthAdjust="spacingAndGlyphs">Sessions</text>
<path d="M1742 228l6 6-6 6M1742 271l6 6-6 6M1742 313l6 6-6 6M1742 356l6 6-6 6" fill="none" stroke="#e0e0e0" stroke-width="1.500"/>
<path d="M1561 256h197M1561 298h197M1561 340h197M1561 382h197" stroke="#424242" stroke-width="1.500"/>

<text x="1799" y="107" font-size="15" font-weight="bold" fill="#fff" textLength="49" lengthAdjust="spacingAndGlyphs">Up Next</text>
<rect x="1784" y="126" width="319" height="59" fill="#fff"/>
<rect x="1784" y="185" width="319" height="178" fill="#e5f3fa"/>
<path d="M1784 243.700H2054M1784 303.700H2054M1784 363H2054" stroke="#b7bcc0" stroke-width="1.300"/>
<path d="M1802 244.500l6 6 6-6M1802 304.500l6 6 6-6" fill="#e5f3fa" stroke="#b7bcc0" stroke-width="1.200"/>
<rect x="1784" y="184.700" width="319" height="1" fill="#d8d8d8"/>
<path d="M1799 154q0-4 3-4h11q1 0 0 2l-2 10q-1 2-3 2h-10q-2 0-1-3z" fill="#3e3e3e"/><path d="M1798 161h11" stroke="#fff"/>
<path d="M1799 214q0-4 3-4h11q1 0 0 2l-2 10q-1 2-3 2h-10q-2 0-1-3z" fill="#3e3e3e"/><path d="M1798 221h11" stroke="#e5f3fa"/>
<text x="1825" y="146" class="rt" textLength="179" lengthAdjust="spacingAndGlyphs">Booking with Rhonda Harvey</text>
<text x="1825" y="165" class="rs" textLength="146" lengthAdjust="spacingAndGlyphs">Lifestyle Management Package</text>
<text x="1825" y="205" class="rt" textLength="174" lengthAdjust="spacingAndGlyphs">Booking with Phillip Hanson</text>
<text x="1825" y="223" class="rs" textLength="141" lengthAdjust="spacingAndGlyphs">Weight Management Package</text>
<text x="1825" y="265" class="rt" textLength="176" lengthAdjust="spacingAndGlyphs">Session with Rhonda Harvey</text>
<text x="1825" y="283" class="rs" textLength="54" lengthAdjust="spacingAndGlyphs">Reschedule</text>
<text x="1825" y="325" class="rt" textLength="176" lengthAdjust="spacingAndGlyphs">Session with Rhonda Harvey</text>
<text x="1825" y="343" class="rs" textLength="54" lengthAdjust="spacingAndGlyphs">Reschedule</text>
<rect x="2054.500" y="244" width="48.500" height="119" fill="#0d2f3f"/>
<g fill="#dfe6ea" text-anchor="middle">
<text x="2079" y="259" font-size="10.500" textLength="18" lengthAdjust="spacingAndGlyphs">Nov</text><text x="2079" y="274" font-size="18" textLength="19" lengthAdjust="spacingAndGlyphs">23</text><text x="2079" y="289" font-size="10.500" textLength="38" lengthAdjust="spacingAndGlyphs">12:15pm</text>
<text x="2079" y="319" font-size="10.500" textLength="18" lengthAdjust="spacingAndGlyphs">Nov</text><text x="2079" y="334" font-size="18" textLength="19" lengthAdjust="spacingAndGlyphs">27</text><text x="2079" y="349" font-size="10.500" textLength="38" lengthAdjust="spacingAndGlyphs">12:15pm</text>
</g>
<circle cx="1940" cy="282" r="15.500" fill="#fc7f9f"/><text x="1940" y="282" font-size="11" fill="#fff" class="m">16</text>

<!-- booking card -->
<rect x="2103" y="125" width="589" height="272" fill="#fff"/>
<rect x="2103" y="397" width="590" height="2" fill="#bcbcbc"/>
<rect x="2103" y="85" width="589" height="40.500" fill="#0d2f3f"/>
<text x="2131.500" y="105" font-size="22" fill="#f0f3f5" textLength="349" lengthAdjust="spacingAndGlyphs">Great news! Your team has a new booking</text>
<use href="#aw" x="2539.500" y="104" width="40" height="40"/><use href="#am" x="2587" y="104" width="40" height="40"/><use href="#ag" x="2635" y="104" width="40" height="40"/>
<text x="2132" y="166" font-size="14" fill="#444" font-weight="bold" textLength="35" lengthAdjust="spacingAndGlyphs">Client:</text>
<text x="2171" y="166" class="bd" font-size="14" textLength="84" lengthAdjust="spacingAndGlyphs">Rhonda Harvey</text>
<text x="2132" y="183" font-size="14" fill="#444" font-weight="bold" textLength="42" lengthAdjust="spacingAndGlyphs">Order#:</text>
<text x="2178" y="183" class="bd" textLength="67" lengthAdjust="spacingAndGlyphs">4325678901</text>
<text x="2132" y="199" font-size="14" fill="#444" font-weight="bold" textLength="49" lengthAdjust="spacingAndGlyphs">Package:</text>
<text x="2185.500" y="199" class="bd" textLength="119" lengthAdjust="spacingAndGlyphs">Lifestyle Management</text>
<text x="2131.500" y="235" font-size="15" fill="#444" font-weight="bold" textLength="144" lengthAdjust="spacingAndGlyphs">What should you do now?</text>
<text x="2131.500" y="258" class="bd" textLength="514" lengthAdjust="spacingAndGlyphs">Lorem ipsum dolor sit amet, consectetur adipiscing elit, sed do eiusmod tempor incididunt ut</text>
<text x="2131.500" y="273" class="bd" textLength="504" lengthAdjust="spacingAndGlyphs">labore et dolore magna aliqua. Ut enim ad minim veniam, quis nostrud exercitation ullamco</text>
<text x="2131.500" y="287" class="bd" textLength="271" lengthAdjust="spacingAndGlyphs">laboris nisi ut aliquip ex ea commodo consequat.</text>
<circle cx="2188.500" cy="277" r="15.500" fill="#fb6f94" opacity=".82"/><text x="2188.500" y="277" font-size="11" fill="#fff" class="m">12</text>
<rect x="2512" y="335" width="147" height="30" fill="#1a97cb"/>
<text x="2529.500" y="350" font-size="16" fill="#dff0f8" textLength="34" lengthAdjust="spacingAndGlyphs">Get to</text>
<text x="2601" y="350" font-size="16" fill="#dff0f8" textLength="41" lengthAdjust="spacingAndGlyphs">Rhonda</text>
<circle cx="2582.500" cy="349" r="16" fill="#f73c72"/><text x="2582.500" y="348" font-size="12" fill="#fff" class="m">14</text>

<!-- lower cards -->
<rect x="2115" y="434" width="579" height="101" fill="#bcbcbc"/><rect x="2115" y="433" width="579" height="101" fill="#fff"/>
<rect x="2115" y="433" width="33" height="41" fill="#979797"/><rect x="2148" y="473.500" width="546" height="1" fill="#efefef"/>
<text x="2131.500" y="447" font-size="13" fill="#e5e5e5" class="m" textLength="19" lengthAdjust="spacingAndGlyphs">Nov</text>
<text x="2131.500" y="460" font-size="18" fill="#f2f2f2" class="m" textLength="20" lengthAdjust="spacingAndGlyphs">22</text>
<text x="2156" y="455" class="ti" textLength="72" lengthAdjust="spacingAndGlyphs">Join a Team</text>
<text x="2147" y="497" class="bd" textLength="463" lengthAdjust="spacingAndGlyphs">Lorem ipsum dolor sit amet, consectetur adipiscing elit, sed do eiusmod tempor incididunt</text>
<text x="2147" y="512" class="bd" textLength="185" lengthAdjust="spacingAndGlyphs">ut labore et dolore magna aliqua.</text>

<rect x="2115" y="558" width="579" height="41" fill="#bcbcbc"/><rect x="2115" y="557" width="579" height="40.500" fill="#fff"/>
<rect x="2115" y="557" width="33" height="40.500" fill="#979797"/>
<text x="2131.500" y="571" font-size="13" fill="#e5e5e5" class="m" textLength="19" lengthAdjust="spacingAndGlyphs">Nov</text>
<text x="2131.500" y="584" font-size="18" fill="#f2f2f2" class="m" textLength="20" lengthAdjust="spacingAndGlyphs">22</text>
<text x="2156" y="578" class="ti" textLength="95" lengthAdjust="spacingAndGlyphs">Self-declaration</text>
<circle cx="2125" cy="569" r="16" fill="#f4567f" opacity=".85"/><text x="2125" y="569" font-size="12" fill="#fff" class="m">10</text>

<rect x="2115.500" y="622" width="578.500" height="41" fill="#bcbcbc"/><rect x="2115.500" y="621" width="578.500" height="41" fill="#fff"/>
<rect x="2115.500" y="621" width="33" height="41" fill="#979797"/>
<text x="2132" y="635" font-size="13" fill="#e5e5e5" class="m" textLength="19" lengthAdjust="spacingAndGlyphs">Nov</text>
<text x="2132" y="648" font-size="18" fill="#f2f2f2" class="m" textLength="20" lengthAdjust="spacingAndGlyphs">22</text>
<rect x="2158" y="636" width="12" height="14" rx="2" fill="none" stroke="#444" stroke-width="1.400"/><path d="M2170.500 642l4-4v11l-4-4" fill="none" stroke="#444" stroke-width="1.400"/>
<text x="2183" y="643" class="ti" textLength="216" lengthAdjust="spacingAndGlyphs">Video call with Enrolment manager</text>
<path d="M2663 638l6 7 6-7" fill="none" stroke="#444" stroke-width="1.500"/>

<rect x="2115.500" y="686" width="578.500" height="27" fill="#fff"/>
<rect x="2115.500" y="686" width="33" height="27" fill="#979797"/>
<text x="2132" y="700" font-size="13" fill="#e5e5e5" class="m" textLength="19" lengthAdjust="spacingAndGlyphs">Nov</text>
<text x="2132" y="713" font-size="18" fill="#f2f2f2" class="m" textLength="20" lengthAdjust="spacingAndGlyphs">22</text>
<text x="2157.500" y="708" class="ti" textLength="266.500" lengthAdjust="spacingAndGlyphs">Book appointment with enrolment manager</text>
<path d="M2663 702l6 7 6-7" fill="none" stroke="#444" stroke-width="1.500"/>

<!-- top bar -->
<rect x="1447" y="5" width="1440" height="1.500" fill="#3b3f47"/>
<rect x="1447" y="6" width="1440" height="47" fill="#1f2533"/>
<rect x="1455" y="16" width="31" height="28" rx="2" fill="#2a3040"/>
<path d="M1464 25h14M1464 30h14M1464 35h14" stroke="#8a909c" stroke-width="1.200"/>
<text x="2568.500" y="27" font-size="11" fill="#8c93a0" textLength="27" lengthAdjust="spacingAndGlyphs">VIEW:</text>
<rect x="2611" y="16" width="93" height="28" fill="#1a1e2a"/><rect x="2704" y="16" width="28" height="28" fill="#2a3040"/>
<text x="2625" y="30" font-size="13.500" fill="#c5c9d1" textLength="56" lengthAdjust="spacingAndGlyphs">All Types (4)</text>
<path d="M2716 28h5l-2.500 3z" fill="#b8bcc5"/>
<rect x="2748" y="22" width="14.500" height="14" fill="#3a4050"/>
<text x="2770.500" y="29.500" font-size="14" fill="#6e7585" textLength="96" lengthAdjust="spacingAndGlyphs">Show Resolved (11)</text>

<!-- bottom bar -->
<rect x="1447" y="713" width="1440" height="44" fill="#1f2533"/>
<rect x="2031" y="713" width="262" height="44" fill="#1c2230"/>
<text x="1473" y="736" font-size="24" style="font-family:'Liberation Serif',serif" font-style="italic" font-weight="bold" fill="#e8eaee" class="m">in</text>
<path d="M1508 733l4 5-4 5M1630 733l4 5-4 5" fill="none" stroke="#454b5a"/>
<text x="1536" y="737" font-size="13" fill="#8e94a1" textLength="71.500" lengthAdjust="spacingAndGlyphs">Expert Journey</text>
<text x="1658" y="737" font-size="13" fill="#8e94a1" textLength="104.500" lengthAdjust="spacingAndGlyphs">Expert Dashboard - ...</text>
<path d="M1774.500 739h5l-2.500-3z" fill="#b0b5c0"/>
<path d="M2047 738q10-10 20 0q-10 10-20 0z" fill="none" stroke="#8c92a0" stroke-width="1.400"/><circle cx="2057" cy="738" r="2" fill="none" stroke="#8c92a0"/>
<path d="M2117.500 738v-9h-17v17h13" fill="none" stroke="#9ea4b0" stroke-width="1.500"/><path d="M2115.500 741l4 5-3 .5-1 2.500z" fill="#9ea4b0"/>
<rect x="2136.500" y="713" width="52" height="2" fill="#e8315f"/>
<rect x="2154" y="731" width="15" height="15" fill="none" stroke="#e8315f" stroke-width="1.600"/><path d="M2158 736h7M2158 739h7M2158 742h7" stroke="#e8315f"/><path d="M2167.500 746v4l-4-4z" fill="#e8315f"/>
<path d="M2208 732l-5 6 5 6M2217 732l5 6-5 6M2214.500 730l-4 16" fill="none" stroke="#8c92a0" stroke-width="1.200"/>
<circle cx="2266" cy="738" r="8" fill="none" stroke="#8c92a0" stroke-width="1.300"/><path d="M2266 733v5h3.500" fill="none" stroke="#8c92a0"/>
<circle cx="2571" cy="737" r="2.500" fill="none" stroke="#7e8492"/><circle cx="2579.500" cy="732" r="2.500" fill="none" stroke="#7e8492"/><circle cx="2579.500" cy="743" r="2.500" fill="none" stroke="#7e8492"/><path d="M2573.500 736l4-3M2573.500 738l4 4" stroke="#7e8492"/>
<path d="M2610 730q7 6 6 11q-1 5-6 5q-6 0-7-5q0-4 3-6q1 2 2 2q1-3 2-7z" fill="#7e8492"/>
<circle cx="2644" cy="737" r="5" fill="none" stroke="#7e8492" stroke-width="3.500"/>
<circle cx="2644" cy="737" r="8" fill="none" stroke="#7e8492" stroke-width="1.500" stroke-dasharray="2.500 3.600"/>
<circle cx="2680" cy="737" r="10" fill="#171c28"/><circle cx="2680" cy="737" r="6" fill="#1f7fb6"/>
<rect x="2714" y="723.500" width="85" height="28.500" rx="2" fill="none" stroke="#2a3040"/>
<path d="M2724.500 729v15l5-7.500zM2729.500 731l8 10-4-.5-1 4z" fill="#9ea4b0"/>
<text x="2743.500" y="737.500" font-size="11" font-weight="bold" fill="#7f8593" textLength="46" lengthAdjust="spacingAndGlyphs">FREEHAND</text>
<rect x="2805.500" y="723.500" width="64.500" height="28.500" rx="2" fill="none" stroke="#2a3040"/>
<path d="M2816 738l5-5v-3l7 6-7 4v-3q-2 0-5 1z" fill="#9ea4b0"/>
<text x="2830" y="737.500" font-size="11" font-weight="bold" fill="#7f8593" textLength="29" lengthAdjust="spacingAndGlyphs">SHARE</text>

<!-- comment popover -->
<path d="M2572.500 374l9-5 9 5z" fill="#fff"/>
<rect x="2546.500" y="374" width="343" height="255" rx="3" fill="#fff" stroke="#e6e8ee"/>
<rect x="2567.500" y="394" width="14" height="14" rx="2" fill="#fff" stroke="#dfe3ea"/>
<text x="2586.500" y="400" font-size="11.500" fill="#a6aec0" textLength="70" lengthAdjust="spacingAndGlyphs">Mark as resolved</text>
<path d="M2849 402h3v3h-3zM2854 402h3v3h-3zM2859 402h3v3h-3z" fill="#b4b9c4"/>
<g filter="url(#bl)">
<ellipse cx="2575.500" cy="447" rx="10" ry="17" fill="#949494"/>
<rect x="2605" y="439" width="33" height="8" fill="#aab0c2"/><rect x="2642" y="441" width="35" height="5" fill="#e6e8ec"/><rect x="2605" y="455" width="112" height="8" fill="#c6c8ce"/>
<circle cx="2834" cy="443" r="5" fill="#dfe1e6"/>
<ellipse cx="2575.500" cy="503" rx="10" ry="17" fill="#949494"/>
<rect x="2605" y="495" width="33" height="8" fill="#aab0c2"/><rect x="2642" y="497" width="35" height="5" fill="#e6e8ec"/><rect x="2605" y="512" width="244" height="8" fill="#c6c8ce"/><rect x="2605" y="529" width="201" height="8" fill="#c6c8ce"/>
<circle cx="2834" cy="499" r="5" fill="#dfe1e6"/>
</g>
<rect x="2569" y="573" width="291" height="32" rx="2" fill="#fff" stroke="#e2e5ec"/>
<text x="2581.500" y="590" font-size="14" fill="#b3b9c6" textLength="100" lengthAdjust="spacingAndGlyphs">Add a new comment</text>

<!-- bottom strip -->
<rect y="757" width="2887" height="6" fill="#fff"/>
<rect x="1445" y="0" width="2" height="763" fill="#fff"/>
<rect x="0" y="0" width="3" height="763" fill="#fff"/>
</svg>
</body></html>
